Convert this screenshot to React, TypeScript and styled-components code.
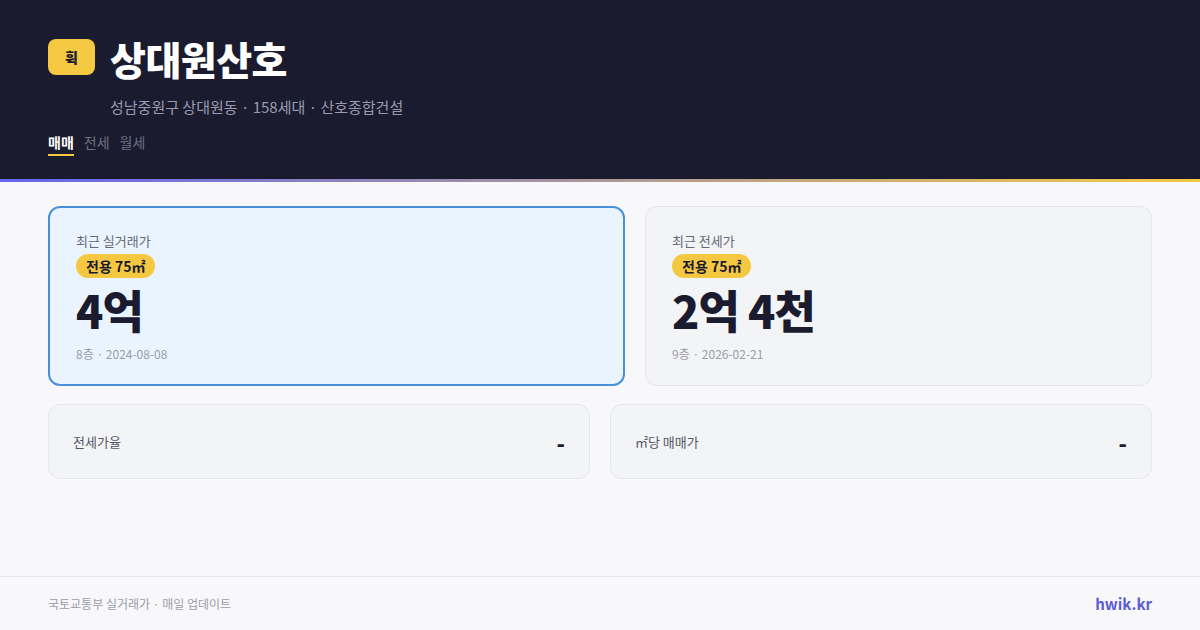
import React from 'react'
import styled, { createGlobalStyle } from 'styled-components'

const GlobalStyle = createGlobalStyle`
  html, body {
    margin: 0;
    padding: 0;
    background: #f8f8fa;
    font-family: "Noto Sans CJK KR", "Noto Sans", sans-serif;
  }
  #root {
    width: 1200px;
    height: 630px;
  }
`

interface Card {
  label: string,
  area: string,
  price: string,
  meta: string,
  active?: boolean
}

const cards: Card[] = [
  { label: '최근 실거래가', area: '전용 75㎡', price: '4억', meta: '8층 · 2024-08-08', active: true },
  { label: '최근 전세가', area: '전용 75㎡', price: '2억 4천', meta: '9층 · 2026-02-21' }
]

const stats = [
  { label: '전세가율', value: '-' },
  { label: '㎡당 매매가', value: '-' }
]

const tabs = ['매매', '전세', '월세']

export default function App() {
  return (<S.Page>
    <GlobalStyle />
    <S.Header>
      <S.TitleRow>
        <S.Logo>휙</S.Logo>
        <S.Info>
          <S.Title>상대원산호</S.Title>
          <S.Sub>성남중원구 상대원동 · 158세대 · 산호종합건설</S.Sub>
        </S.Info>
      </S.TitleRow>
      <S.Tabs>
        {
          tabs.map((t, i) => <S.Tab key={t} active={i === 0}>{t}</S.Tab>)
        }
      </S.Tabs>
    </S.Header>
    <S.Main>
      <S.TopRow>
        {
          cards.map(c => <S.PriceCard key={c.label} active={c.active}>
            <S.Label>{c.label}</S.Label>
            <S.Area>{c.area}</S.Area>
            <S.Price>{c.price}</S.Price>
            <S.Meta>{c.meta}</S.Meta>
          </S.PriceCard>)
        }
      </S.TopRow>
      <S.BottomRow>
        {
          stats.map(s => <S.Stat key={s.label}>
            <S.StatLabel>{s.label}</S.StatLabel>
            <S.StatValue>{s.value}</S.StatValue>
          </S.Stat>)
        }
      </S.BottomRow>
    </S.Main>
    <S.Footer>
      <S.Source>국토교통부 실거래가 · 매일 업데이트</S.Source>
      <S.Brand>hwik.kr</S.Brand>
    </S.Footer>
  </S.Page>)
}

const S = {
  Page: styled.div`
    width: 1200px;
    height: 630px;
    display: flex;
    flex-direction: column;
    background: #f8f8fa;
    overflow: hidden;
  `,
  Header: styled.header`
    background: #1a1b2e;
    padding: 33px 48px 0;
    box-sizing: content-box;
    height: 146px;
    border-bottom: 3px solid transparent;
    border-image: linear-gradient(90deg, #6366f1, #f5c842) 1;
  `,
  TitleRow: styled.div`
    display: flex;
    align-items: flex-start;
    gap: 15px;
  `,
  Logo: styled.div`
    width: 47px;
    height: 36px;
    margin-top: 6px;
    border-radius: 8px;
    background: #f5c842;
    color: #1a1b2e;
    font-size: 14px;
    font-weight: 800;
    display: flex;
    align-items: center;
    justify-content: center;
  `,
  Info: styled.div`
    display: flex;
    flex-direction: column;
  `,
  Title: styled.h1`
    margin: 0;
    color: #ffffff;
    font-size: 39px;
    font-weight: 900;
    line-height: 50px;
    letter-spacing: -0.5px;
  `,
  Sub: styled.div`
    margin-top: 14px;
    color: #9a9bb0;
    font-size: 15px;
    line-height: 20px;
  `,
  Tabs: styled.div`
    display: flex;
    gap: 10px;
    margin-top: 15px;
  `,
  Tab: styled.div<{
    active?: boolean
  }>`
    font-size: 14px;
    line-height: 20px;
    padding-bottom: 2px;
    font-weight: ${props => props.active ? 700 : 400};
    color: ${props => props.active ? '#ffffff' : '#6e6f85'};
    border-bottom: 2px solid ${props => props.active ? '#f5c842' : 'transparent'};
  `,
  Main: styled.main`
    flex: 1;
    padding: 24px 48px 0;
    display: flex;
    flex-direction: column;
    gap: 18px;
  `,
  TopRow: styled.div`
    display: grid;
    grid-template-columns: 577px 1fr;
    gap: 20px;
  `,
  PriceCard: styled.div<{
    active?: boolean
  }>`
    height: 180px;
    box-sizing: border-box;
    border-radius: 12px;
    padding: ${props => props.active ? '24px 26px' : '25px 26px'};
    background: ${props => props.active ? '#eaf4ff' : '#f3f4f6'};
    border: ${props => props.active ? '2px solid #4a90d9' : '1px solid #e5e7eb'};
    display: flex;
    flex-direction: column;
    align-items: flex-start;
  `,
  Label: styled.div`
    font-size: 13px;
    line-height: 18px;
    color: #666876;
  `,
  Area: styled.div`
    margin-top: 4px;
    background: #f5c842;
    color: #1a1b2e;
    font-size: 14px;
    font-weight: 700;
    line-height: 24px;
    padding: 0 10px;
    border-radius: 12px;
  `,
  Price: styled.div`
    margin-top: 4px;
    font-size: 45px;
    font-weight: 800;
    line-height: 56px;
    letter-spacing: -1px;
    color: #1a1b2e;
  `,
  Meta: styled.div`
    margin-top: 8px;
    font-size: 12px;
    line-height: 16px;
    color: #9a9ca8;
  `,
  BottomRow: styled.div`
    display: grid;
    grid-template-columns: 1fr 1fr;
    gap: 20px;
  `,
  Stat: styled.div`
    height: 75px;
    box-sizing: border-box;
    border-radius: 12px;
    background: #f3f4f6;
    border: 1px solid #e5e7eb;
    padding: 0 24px;
    display: flex;
    align-items: center;
    justify-content: space-between;
  `,
  StatLabel: styled.div`
    font-size: 13px;
    color: #555766;
  `,
  StatValue: styled.div`
    font-size: 22px;
    font-weight: 800;
    color: #1a1b2e;
  `,
  Footer: styled.footer`
    height: 53px;
    border-top: 1px solid #e5e7eb;
    padding: 0 48px;
    display: flex;
    align-items: center;
    justify-content: space-between;
  `,
  Source: styled.div`
    font-size: 12px;
    color: #9a9ca8;
  `,
  Brand: styled.div`
    font-size: 15px;
    font-weight: 700;
    color: #5b5bd6;
  `
}
